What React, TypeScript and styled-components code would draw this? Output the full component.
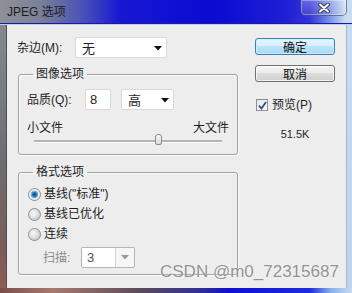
import styled, { createGlobalStyle } from "styled-components";

const GlobalStyle = createGlobalStyle`
  html, body {
    margin: 0;
    padding: 0;
  }
  body {
    width: 352px;
    height: 293px;
    overflow: hidden;
    font-family: "Liberation Sans", "Noto Sans CJK SC", sans-serif;
    font-size: 12px;
    color: #1e1e1e;
  }
`;

const quality = 8;
const maxQuality = 12;

function Arrow({ disabled }: { disabled?: boolean }) {
  return (
    <svg width="8" height="5" viewBox="0 0 8 5">
      <path d="M0 0 H8 L4 4.5 Z" fill={disabled ? "#9a9a9a" : "#111"} />
    </svg>
  );
}

export default function App() {
  return (
    <Window>
      <GlobalStyle />
      <TitleBar>
        <Title>JPEG 选项</Title>
        <CloseButton>
          <svg width="14" height="10" viewBox="0 0 14 10">
            <path d="M3 1.5 L11 8.5 M11 1.5 L3 8.5" stroke="#3a3a50" strokeWidth="4" strokeLinecap="round" />
            <path d="M3 1.5 L11 8.5 M11 1.5 L3 8.5" stroke="#fff" strokeWidth="2" strokeLinecap="round" />
          </svg>
        </CloseButton>
      </TitleBar>
      <LeftEdge />
      <Content>
        <LeftColumn>
          <FieldRow>
            <Label $width={58}>杂边(M):</Label>
            <Select $width={92}>
              <span>无</span>
              <Arrow />
            </Select>
          </FieldRow>

          <Group>
            <Legend>图像选项</Legend>
            <FieldRow>
              <Label $width={58}>品质(Q):</Label>
              <NumberBox>8</NumberBox>
              <Select $width={53}>
                <span>高</span>
                <Arrow />
              </Select>
            </FieldRow>
            <SizeLabels>
              <span>小文件</span>
              <span>大文件</span>
            </SizeLabels>
            <Slider>
              <Track>
                <Thumb style={{ left: `calc(${(quality / maxQuality) * 100}% - 4px)` }} />
              </Track>
            </Slider>
          </Group>

          <Group $gap={10} $top={5} $bottom={6}>
            <Legend>格式选项</Legend>
            <RadioRow>
              <Radio $checked />
              <span>基线("标准")</span>
            </RadioRow>
            <RadioRow>
              <Radio />
              <span>基线已优化</span>
            </RadioRow>
            <RadioRow>
              <Radio />
              <span>连续</span>
            </RadioRow>
            <ScanRow>
              <Label $width={38} $disabled>扫描:</Label>
              <DisabledSelect>
                <span>3</span>
                <ArrowCell>
                  <Arrow disabled />
                </ArrowCell>
              </DisabledSelect>
            </ScanRow>
          </Group>
        </LeftColumn>

        <RightColumn>
          <Button $primary>确定</Button>
          <Button>取消</Button>
          <CheckRow>
            <Checkbox>
              <svg width="9" height="9" viewBox="0 0 9 9">
                <path d="M1 4.5 L3.5 7.5 L8 1" stroke="#2a4f9a" strokeWidth="1.8" fill="none" />
              </svg>
            </Checkbox>
            <span>预览(P)</span>
          </CheckRow>
          <FileSize>51.5K</FileSize>
        </RightColumn>
      </Content>
      <RightEdge />
      <BottomEdge />
      <Watermark>CSDN @m0_72315687</Watermark>
    </Window>
  );
}

const Window = styled.div`
  position: relative;
  width: 352px;
  height: 293px;
  display: grid;
  grid-template-columns: 6px 1fr 5px;
  grid-template-rows: 25px 1fr 5px;
  background: #1414d2;
`;

const TitleBar = styled.div`
  grid-column: 1 / -1;
  display: flex;
  justify-content: space-between;
  align-items: flex-start;
  padding-left: 7px;
  background: linear-gradient(
    90deg,
    #8d9198 0%,
    #7a7f98 12%,
    #4650b8 24%,
    #1818d2 34%,
    #0a0ad2 60%,
    #2020d6 82%,
    #3434d8 88%,
    #6f86e4 93%,
    #c8dcf2 98%
  );
  box-shadow: inset 0 -1px 0 #c4c8ee, inset 0 -2px 0 #1a1aa8;
`;

const Title = styled.div`
  margin-top: 5px;
  font-size: 12px;
  line-height: 14px;
  color: #1c1c1c;
`;

const CloseButton = styled.div`
  width: 45px;
  height: 15px;
  margin-right: 5px;
  display: flex;
  align-items: center;
  justify-content: center;
  border: 1px solid rgba(40, 40, 80, 0.55);
  border-top: none;
  border-radius: 0 0 5px 5px;
  background: linear-gradient(180deg, rgba(255, 255, 255, 0.25), rgba(255, 255, 255, 0.08));
  box-shadow: inset 0 0 0 1px rgba(255, 255, 255, 0.35);
`;

const LeftEdge = styled.div`
  background: linear-gradient(180deg, #858a90 0%, #6d6e72 50%, #7a5c58 85%, #8c5e56 100%);
`;

const RightEdge = styled.div`
  background: linear-gradient(180deg, #c6dcf2, #bcd4ee);
`;

const BottomEdge = styled.div`
  grid-column: 1 / -1;
  background: linear-gradient(
    90deg,
    #7a4f4a 0%,
    #a87a70 15%,
    #5a4a5a 40%,
    #2c2c9a 58%,
    #0e0ed2 65%,
    #1c2ce0 88%,
    #8ab0ea 94%,
    #c6dcf2 100%
  );
`;

const Content = styled.div`
  display: grid;
  grid-template-columns: 221px 80px;
  column-gap: 17px;
  align-items: start;
  padding: 12px 0 0 10px;
  background: #ededed;
  border-left: 1px solid #4e4e52;
  border-right: 1px solid #a6b6c8;
`;

const LeftColumn = styled.div`
  display: flex;
  flex-direction: column;
`;

const FieldRow = styled.div`
  display: flex;
  align-items: center;
  height: 21px;
`;

const Label = styled.span<{ $width: number; $disabled?: boolean }>`
  width: ${(p) => p.$width}px;
  flex-shrink: 0;
  color: ${(p) => (p.$disabled ? "#8c8c8c" : "#1e1e1e")};
  line-height: 14px;
`;

const Select = styled.div<{ $width: number }>`
  box-sizing: border-box;
  width: ${(p) => p.$width}px;
  height: 21px;
  display: flex;
  align-items: center;
  justify-content: space-between;
  padding: 0 4px 0 6px;
  background: #fff;
  border: 1px solid #dadada;
  border-radius: 2px;
  font-size: 13px;
  svg {
    margin-bottom: -1px;
  }
`;

const NumberBox = styled.div`
  box-sizing: border-box;
  width: 26px;
  height: 21px;
  margin-right: 10px;
  padding-left: 4px;
  display: flex;
  align-items: center;
  background: #fff;
  border: 1px solid #dadada;
  border-radius: 2px;
  font-size: 13px;
`;

const Group = styled.fieldset<{ $gap?: number; $top?: number; $bottom?: number }>`
  margin: ${(p) => p.$gap ?? 9}px 0 0 1px;
  min-width: 0;
  width: 220px;
  box-sizing: border-box;
  padding: ${(p) => p.$top ?? 8}px 8px ${(p) => p.$bottom ?? 7}px 8px;
  border: 1px solid #a2a2a2;
  border-radius: 3px;
  box-shadow: inset 1px 1px 0 #fbfbfb, 1px 1px 0 #fbfbfb;
`;

const Legend = styled.legend`
  margin-left: 6px;
  padding: 0 3px;
  line-height: 14px;
  font-size: 12px;
  color: #1e1e1e;
`;

const SizeLabels = styled.div`
  display: flex;
  justify-content: space-between;
  margin-top: 11px;
  line-height: 14px;
`;

const Slider = styled.div`
  height: 12px;
  padding: 0 7px;
  display: flex;
  align-items: center;
`;

const Track = styled.div`
  position: relative;
  flex: 1;
  height: 2px;
  background: #b4b4b4;
  border-bottom: 1px solid #fff;
`;

const Thumb = styled.div`
  position: absolute;
  top: -6px;
  width: 7px;
  height: 11px;
  box-sizing: border-box;
  border: 1px solid #8a8a8a;
  border-radius: 3px 3px 2px 2px;
  background: linear-gradient(180deg, #fafafa, #d9d9d9);
`;

const RadioRow = styled.div`
  display: flex;
  align-items: center;
  gap: 3px;
  height: 20px;
  padding-left: 1px;
  line-height: 14px;
`;

const Radio = styled.span<{ $checked?: boolean }>`
  width: 13px;
  height: 13px;
  box-sizing: border-box;
  border-radius: 50%;
  border: 1px solid #8c8e92;
  background: ${(p) =>
    p.$checked
      ? "radial-gradient(circle at 50% 50%, #123e6c 0, #2a78b8 2px, #6cc0ee 3.5px, #e6e6e6 4px, #f4f4f4 6px)"
      : "radial-gradient(circle at 40% 40%, #fafafa 0, #e2e2e2 4px, #cfcfcf 6px)"};
`;

const ScanRow = styled.div`
  display: flex;
  align-items: center;
  height: 21px;
  margin-top: 3px;
  padding-left: 16px;
`;

const DisabledSelect = styled.div`
  box-sizing: border-box;
  width: 54px;
  height: 21px;
  display: flex;
  align-items: stretch;
  background: #f6f6f6;
  border: 1px solid #b6b6b6;
  border-radius: 2px;
  font-size: 13px;
  color: #46506e;
  span {
    flex: 1;
    display: flex;
    align-items: center;
    padding-left: 5px;
    background: #fff;
  }
`;

const ArrowCell = styled.div`
  width: 18px;
  display: flex;
  align-items: center;
  justify-content: center;
  border-left: 1px solid #d4d4d4;
`;

const RightColumn = styled.div`
  display: flex;
  flex-direction: column;
  padding-top: 1px;
`;

const Button = styled.div<{ $primary?: boolean }>`
  box-sizing: border-box;
  height: 17px;
  margin-bottom: 10px;
  display: flex;
  align-items: center;
  justify-content: center;
  border-radius: 3px;
  font-size: 12px;
  color: #111;
  border: 1px solid ${(p) => (p.$primary ? "#3c7fb1" : "#707070")};
  background: ${(p) =>
    p.$primary
      ? "linear-gradient(180deg, #e6f5fd 0%, #d8effc 45%, #bde4f9 50%, #a7d9f5 100%)"
      : "linear-gradient(180deg, #f6f6f6 0%, #ebebeb 45%, #dddddd 50%, #cfcfcf 100%)"};
  box-shadow: inset 0 0 0 1px ${(p) => (p.$primary ? "rgba(200, 240, 255, 0.9)" : "rgba(255, 255, 255, 0.7)")};
`;

const CheckRow = styled.div`
  display: flex;
  align-items: center;
  gap: 4px;
  height: 14px;
  margin-top: 6px;
  padding-left: 1px;
  line-height: 14px;
`;

const Checkbox = styled.span`
  width: 12px;
  height: 12px;
  box-sizing: border-box;
  display: flex;
  align-items: center;
  justify-content: center;
  border: 1px solid #8e8f8f;
  background: linear-gradient(135deg, #e4e4e4, #fdfdfd);
`;

const FileSize = styled.div`
  margin-top: 15px;
  text-align: center;
  font-size: 11px;
  line-height: 14px;
  color: #1e1e1e;
`;

const Watermark = styled.div`
  position: absolute;
  left: 160px;
  top: 262px;
  font-family: "Liberation Sans", sans-serif;
  font-size: 17px;
  line-height: 20px;
  color: rgba(128, 128, 128, 0.85);
  text-shadow: 0 0 2px rgba(255, 255, 255, 0.9);
  white-space: nowrap;
`;
